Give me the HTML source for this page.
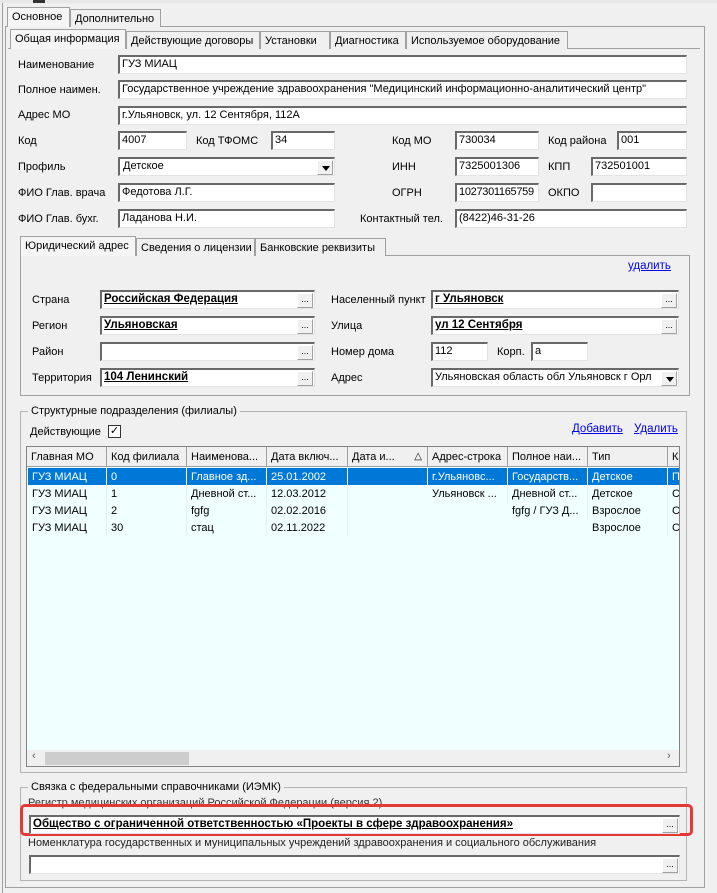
<!DOCTYPE html>
<html><head><meta charset="utf-8"><style>
*{box-sizing:border-box;margin:0;padding:0}
body{width:717px;height:893px;background:#f0f0f0;font-family:"Liberation Sans",sans-serif;font-size:11px;color:#000;position:relative;overflow:hidden}
.a{position:absolute;white-space:nowrap}
.l{position:absolute;white-space:nowrap;line-height:14px}
.i{position:absolute;height:19px;background:#fff;border:1px solid #a0a0a0;border-top:2px solid #696969;border-left:2px solid #696969;border-bottom-color:#e3e3e3;border-right-color:#e3e3e3;padding:0 0 0 2px;line-height:15px;white-space:nowrap;overflow:hidden}
.b{font-weight:bold;text-decoration:underline;font-size:11.5px}
.btn{position:absolute;right:1px;top:1px;width:16px;height:15px;background:#f0f0f0;border:1px solid #a0a0a0;border-top-color:#fff;border-left-color:#fff;font-size:9px;font-weight:normal;line-height:10px;text-align:center;text-decoration:none}
.dd{position:absolute;right:1px;top:1px;width:16px;height:15px;background:#f0f0f0;border:1px solid #a0a0a0;border-top-color:#fff;border-left-color:#fff}
.dd:after{content:"";position:absolute;left:4px;top:5px;border:4px solid transparent;border-top:5px solid #000;border-bottom:0}
.tab{position:absolute;height:18px;border:1px solid #a0a0a0;border-bottom:none;background:#f0f0f0;padding:2px 4px 0;white-space:nowrap;line-height:14px;overflow:hidden}
.tab.s{background:#f5f5f5;height:20px;z-index:2}
.pan{position:absolute;border:1px solid #a0a0a0}
.grp{position:absolute;border:1px solid #b4b4b4}
.lnk{position:absolute;color:#0000ee;text-decoration:underline;font-size:11.5px}
.g{position:absolute;left:26px;top:446px;width:654px;height:321px;background:#f0ffff;border:1px solid #828282;overflow:hidden}
.h{position:absolute;top:0;height:20px;background:#f0f0f0;border-right:1px solid #a0a0a0;border-bottom:1px solid #a0a0a0;padding:3px 4px;line-height:14px;overflow:hidden;white-space:nowrap}
.c{position:absolute;height:17px;padding:2px 4px;line-height:14px;overflow:hidden;white-space:nowrap;border-right:1px solid #e4f2f2}
.sel{background:#0078d7;color:#fff;border-right-color:#fff}
</style></head><body>
<div class="a" style="left:0;top:0;width:717px;height:3px;background:#e8e8e8"></div>
<div class="a" style="left:33px;top:0;width:12px;height:3px;background:#333"></div>
<div class="a" style="left:2px;top:3px;width:1px;height:890px;background:#a0a0a0"></div>

<div class="pan" style="left:5px;top:26px;width:700px;height:862px"></div>
<div class="tab s" style="left:7px;top:7px;width:63px">Основное</div>
<div class="tab" style="left:70px;top:9px;width:91px">Дополнительно</div>

<div class="a" style="left:8px;top:48px;width:692px;height:1px;background:#a0a0a0"></div>
<div class="tab s" style="left:10px;top:29px;width:116px">Общая информация</div>
<div class="tab" style="left:126px;top:31px;width:134px">Действующие договоры</div>
<div class="tab" style="left:260px;top:31px;width:70px">Установки</div>
<div class="tab" style="left:330px;top:31px;width:76px">Диагностика</div>
<div class="tab" style="left:406px;top:31px;width:162px">Используемое оборудование</div>

<div class="l" style="left:18px;top:58px">Наименование</div><div class="i" style="left:118px;top:55px;width:569px">ГУЗ МИАЦ</div>
<div class="l" style="left:18px;top:83px">Полное наимен.</div><div class="i" style="left:118px;top:80px;width:569px">Государственное учреждение здравоохранения "Медицинский информационно-аналитический центр"</div>
<div class="l" style="left:18px;top:108px">Адрес МО</div><div class="i" style="left:118px;top:106px;width:569px">г.Ульяновск, ул. 12 Сентября, 112А</div>

<div class="l" style="left:18px;top:134px">Код</div><div class="i" style="left:118px;top:131px;width:69px">4007</div>
<div class="l" style="left:196px;top:134px">Код ТФОМС</div><div class="i" style="left:271px;top:131px;width:64px">34</div>
<div class="l" style="left:392px;top:134px">Код МО</div><div class="i" style="left:455px;top:131px;width:84px">730034</div>
<div class="l" style="left:548px;top:134px">Код района</div><div class="i" style="left:617px;top:131px;width:70px">001</div>

<div class="l" style="left:18px;top:160px">Профиль</div><div class="i" style="left:118px;top:157px;width:217px;padding-left:3px">Детское<div class="dd"></div></div>
<div class="l" style="left:392px;top:160px">ИНН</div><div class="i" style="left:455px;top:157px;width:84px">7325001306</div>
<div class="l" style="left:548px;top:160px">КПП</div><div class="i" style="left:591px;top:157px;width:96px">732501001</div>

<div class="l" style="left:18px;top:186px">ФИО Глав. врача</div><div class="i" style="left:118px;top:183px;width:217px">Федотова Л.Г.</div>
<div class="l" style="left:392px;top:186px">ОГРН</div><div class="i" style="left:455px;top:183px;width:84px;letter-spacing:-0.3px">1027301165759</div>
<div class="l" style="left:548px;top:186px">ОКПО</div><div class="i" style="left:591px;top:183px;width:96px"></div>

<div class="l" style="left:18px;top:212px">ФИО Глав. бухг.</div><div class="i" style="left:118px;top:209px;width:217px">Ладанова Н.И.</div>
<div class="l" style="left:360px;top:212px">Контактный тел.</div><div class="i" style="left:455px;top:209px;width:232px">(8422)46-31-26</div>

<div class="pan" style="left:20px;top:255px;width:670px;height:141px"></div>
<div class="tab s" style="left:20px;top:236px;width:116px">Юридический адрес</div>
<div class="tab" style="left:136px;top:238px;width:119px">Сведения о лицензии</div>
<div class="tab" style="left:255px;top:238px;width:131px">Банковские реквизиты</div>
<div class="lnk" style="left:628px;top:260px">удалить</div>

<div class="l" style="left:32px;top:293px">Страна</div><div class="i b" style="left:100px;top:290px;width:215px">Российская Федерация<div class="btn">...</div></div>
<div class="l" style="left:32px;top:319px">Регион</div><div class="i b" style="left:100px;top:316px;width:215px">Ульяновская<div class="btn">...</div></div>
<div class="l" style="left:32px;top:345px">Район</div><div class="i" style="left:100px;top:342px;width:215px"><div class="btn">...</div></div>
<div class="l" style="left:32px;top:371px">Территория</div><div class="i b" style="left:100px;top:368px;width:215px">104 Ленинский<div class="btn">...</div></div>

<div class="l" style="left:331px;top:293px">Населенный пункт</div><div class="i b" style="left:431px;top:290px;width:248px">г Ульяновск<div class="btn">...</div></div>
<div class="l" style="left:331px;top:319px">Улица</div><div class="i b" style="left:431px;top:316px;width:248px">ул 12 Сентября<div class="btn">...</div></div>
<div class="l" style="left:331px;top:345px">Номер дома</div><div class="i" style="left:431px;top:342px;width:57px">112</div>
<div class="l" style="left:497px;top:345px">Корп.</div><div class="i" style="left:531px;top:342px;width:57px">а</div>
<div class="l" style="left:331px;top:371px">Адрес</div><div class="i" style="left:431px;top:368px;width:248px">Ульяновская область обл Ульяновск г Орл<div class="dd"></div></div>

<div class="grp" style="left:20px;top:411px;width:667px;height:362px"></div>
<div class="l" style="left:28px;top:404px;background:#f0f0f0;padding:0 3px">Структурные подразделения (филиалы)</div>
<div class="l" style="left:30px;top:425px">Действующие</div>
<div class="a" style="left:108px;top:425px;width:13px;height:13px;background:#fff;border:1px solid #333;font-size:11px;line-height:11px;text-align:center">✓</div>
<div class="lnk" style="left:572px;top:423px">Добавить</div>
<div class="lnk" style="left:634px;top:423px">Удалить</div>

<div class="g">
<div class="h" style="left:0;width:80px">Главная МО</div>
<div class="h" style="left:80px;width:80px">Код филиала</div>
<div class="h" style="left:160px;width:80px">Наименова...</div>
<div class="h" style="left:240px;width:81px">Дата включ...</div>
<div class="h" style="left:321px;width:80px">Дата и... <span style="position:absolute;right:5px;font-size:10px">△</span></div>
<div class="h" style="left:401px;width:80px">Адрес-строка</div>
<div class="h" style="left:481px;width:80px">Полное наи...</div>
<div class="h" style="left:561px;width:80px">Тип</div>
<div class="h" style="left:641px;width:30px">Ка</div>

<div class="c sel" style="left:1px;top:21px;width:79px">ГУЗ МИАЦ</div><div class="c sel" style="left:80px;top:21px;width:80px">0</div><div class="c sel" style="left:160px;top:21px;width:80px">Главное зд...</div><div class="c sel" style="left:240px;top:21px;width:81px">25.01.2002</div><div class="c sel" style="left:321px;top:21px;width:80px"></div><div class="c sel" style="left:401px;top:21px;width:80px">г.Ульяновс...</div><div class="c sel" style="left:481px;top:21px;width:80px">Государств...</div><div class="c sel" style="left:561px;top:21px;width:80px">Детское</div><div class="c sel" style="left:641px;top:21px;width:20px">По</div>

<div class="c" style="left:1px;top:38px;width:79px">ГУЗ МИАЦ</div><div class="c" style="left:80px;top:38px;width:80px">1</div><div class="c" style="left:160px;top:38px;width:80px">Дневной ст...</div><div class="c" style="left:240px;top:38px;width:81px">12.03.2012</div><div class="c" style="left:401px;top:38px;width:80px">Ульяновск ...</div><div class="c" style="left:481px;top:38px;width:80px">Дневной ст...</div><div class="c" style="left:561px;top:38px;width:80px">Детское</div><div class="c" style="left:641px;top:38px;width:20px">Ст</div>

<div class="c" style="left:1px;top:55px;width:79px">ГУЗ МИАЦ</div><div class="c" style="left:80px;top:55px;width:80px">2</div><div class="c" style="left:160px;top:55px;width:80px">fgfg</div><div class="c" style="left:240px;top:55px;width:81px">02.02.2016</div><div class="c" style="left:481px;top:55px;width:80px">fgfg / ГУЗ Д...</div><div class="c" style="left:561px;top:55px;width:80px">Взрослое</div><div class="c" style="left:641px;top:55px;width:20px">Ст</div>

<div class="c" style="left:1px;top:72px;width:79px">ГУЗ МИАЦ</div><div class="c" style="left:80px;top:72px;width:80px">30</div><div class="c" style="left:160px;top:72px;width:80px">стац</div><div class="c" style="left:240px;top:72px;width:81px">02.11.2022</div><div class="c" style="left:561px;top:72px;width:80px">Взрослое</div><div class="c" style="left:641px;top:72px;width:20px">Ст</div>

<div class="a" style="left:0;top:303px;width:654px;height:17px;background:#f0f0f0"></div>
<div class="a" style="left:18px;top:305px;width:144px;height:13px;background:#cdcdcd"></div>
<div class="a" style="left:5px;top:303px;font-size:11px;color:#606060">‹</div>
<div class="a" style="left:640px;top:303px;font-size:11px;color:#606060">›</div>
</div>

<div class="grp" style="left:20px;top:787px;width:667px;height:94px"></div>
<div class="l" style="left:28px;top:780px;background:#f0f0f0;padding:0 3px">Связка с федеральными справочниками (ИЭМК)</div>
<div class="l" style="left:28px;top:796px;color:#333">Регистр медицинских организаций Российской Федерации (версия 2)</div>
<div class="a" style="left:20px;top:804px;width:673px;height:32px;border:3px solid #e53935;border-radius:5px"></div>
<div class="i b" style="left:29px;top:815px;width:651px">Общество с ограниченной ответственностью «Проекты в сфере здравоохранения»<div class="btn">...</div></div>
<div class="l" style="left:28px;top:836px;color:#222">Номенклатура государственных и муниципальных учреждений здравоохранения и социального обслуживания</div>
<div class="i" style="left:29px;top:855px;width:651px"><div class="btn">...</div></div>
</body></html>
